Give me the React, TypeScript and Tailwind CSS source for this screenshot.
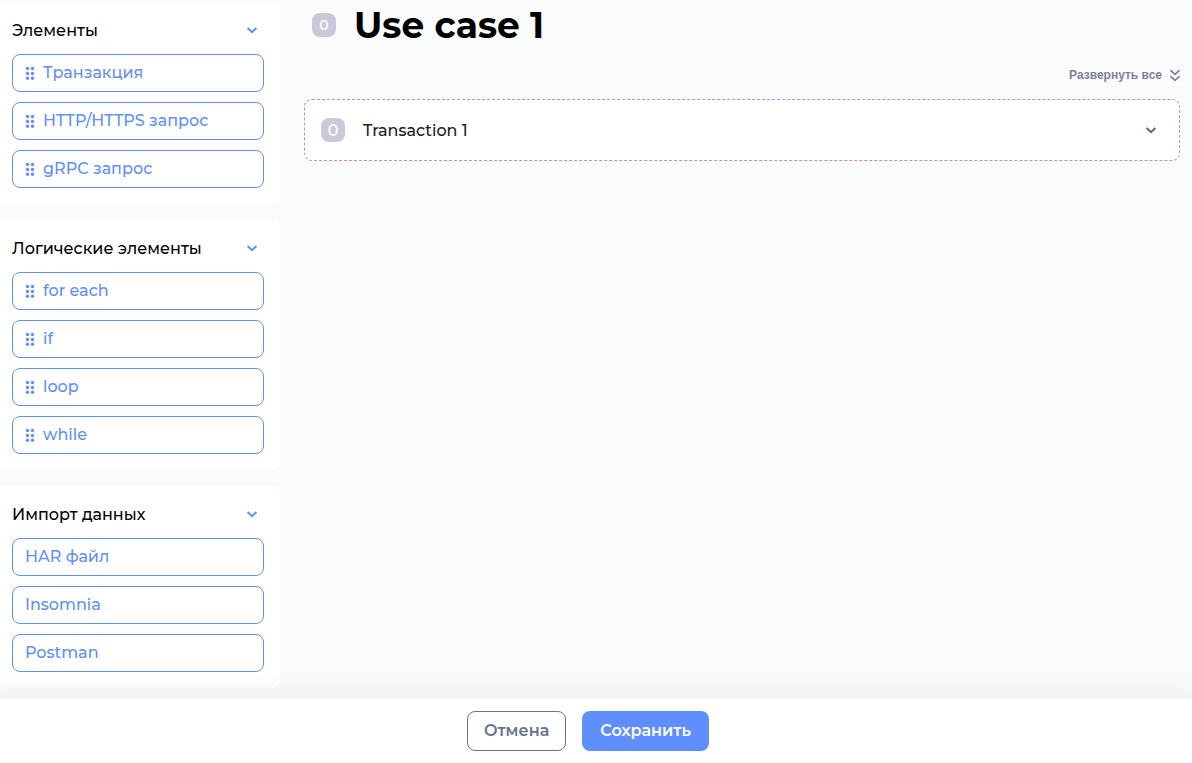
// ── Редактор сценария: палитра элементов и список шагов ──
import { useState } from "react";

interface PaletteSection {
  title: string;
  items: string[];
  draggable: boolean;
}

const SECTIONS: PaletteSection[] = [
  {
    title: "Элементы",
    items: ["Транзакция", "HTTP/HTTPS запрос", "gRPC запрос"],
    draggable: true,
  },
  {
    title: "Логические элементы",
    items: ["for each", "if", "loop", "while"],
    draggable: true,
  },
  {
    title: "Импорт данных",
    items: ["HAR файл", "Insomnia", "Postman"],
    draggable: false,
  },
];

export default function App() {
  return (
    <div className="flex min-h-screen flex-col bg-[#fafcfb] font-['Montserrat','Inter',sans-serif] text-base text-black">
      <div className="flex flex-1 gap-6 pr-3">
        {/* Палитра */}
        <aside className="flex w-70 shrink-0 flex-col gap-4 pt-0.5 pb-2">
          {SECTIONS.map((section) => (
            <Section key={section.title} section={section} />
          ))}
        </aside>

        {/* Сценарий */}
        <main className="min-w-0 flex-1">
          <div className="flex h-12 items-center gap-4.5 pt-0.5 pl-2">
            <Badge size="small" />
            <h1 className="text-4xl font-bold">Use case 1</h1>
          </div>
          <div className="mt-[15px] flex justify-end">
            <button
              type="button"
              className="flex h-6 items-center gap-2 font-['Liberation_Sans',Arial,sans-serif] text-xs font-bold text-[#80809b]"
            >
              Развернуть все
              <svg width="10" height="13" viewBox="0 0 10 13" fill="none" aria-hidden="true">
                <path d="M0.4 1.2l4.6 4.2L9.6 1.2M0.4 7.2l4.6 4.2L9.6 7.2" stroke="currentColor" strokeWidth="1.6" />
              </svg>
            </button>
          </div>
          <div className="mt-3 rounded-lg border border-dashed border-[#b78af0] bg-white">
            <button type="button" className="flex h-15 w-full items-center gap-4.5 pr-5 pl-4 text-left">
              <Badge size="large" />
              <span className="flex-1 pt-0.5 font-medium text-[#212121]">Transaction 1</span>
              <Chevron className="text-[#596b80]" />
            </button>
          </div>
        </main>
      </div>

      {/* Панель действий */}
      <footer className="sticky bottom-0 flex h-16 items-center justify-center gap-4 bg-white pr-4 shadow-[0_0_24px_8px_rgba(89,107,128,0.08)]">
        <button
          type="button"
          className="h-10 rounded-lg border border-[#64748b] px-4 font-semibold text-[#64748b]"
        >
          Отмена
        </button>
        <button type="button" className="h-10 rounded-lg bg-[#5f8fff] px-4.5 font-semibold text-white">
          Сохранить
        </button>
      </footer>
    </div>
  );
}

function Section({ section }: { section: PaletteSection }) {
  const [open, setOpen] = useState(true);

  return (
    <section className="rounded-r-lg bg-white px-3 pr-4 pb-4">
      <h2>
        <button
          type="button"
          aria-expanded={open}
          onClick={() => setOpen(!open)}
          className="flex h-13 w-full items-center justify-between pt-1 pr-1 text-left font-medium"
        >
          <span className="pt-0.5">{section.title}</span>
          <Chevron className={open ? "text-[#5f8fff]" : "-rotate-90 text-[#5f8fff]"} />
        </button>
      </h2>
      {open && (
        <ul className="flex flex-col gap-2.5">
          {section.items.map((item) => (
            <li key={item}>
              <button
                type="button"
                draggable={section.draggable}
                className="flex h-9.5 w-full items-center gap-2 rounded-lg border border-[#5f8fff] px-3 text-left font-medium text-[#5f8fff]"
              >
                {section.draggable && <DragHandle />}
                {item}
              </button>
            </li>
          ))}
        </ul>
      )}
    </section>
  );
}

function Badge({ size }: { size: "small" | "large" }) {
  return (
    <span
      className={`flex h-6 w-6 shrink-0 items-center justify-center rounded-lg bg-[#c9c9da] font-medium text-white ${
        size === "small" ? "text-sm" : "pt-0.5 text-base"
      }`}
    >
      0
    </span>
  );
}

function Chevron({ className }: { className: string }) {
  return (
    <svg width="16" height="16" viewBox="0 0 16 16" fill="none" aria-hidden="true" className={className}>
      <path d="M3.6 6L8 10.2l4.4-4.2" stroke="currentColor" strokeWidth="2" />
    </svg>
  );
}

function DragHandle() {
  return (
    <svg width="10" height="14" viewBox="0 0 10 14" fill="currentColor" aria-hidden="true">
      <circle cx="2.5" cy="2.5" r="1.7" />
      <circle cx="7.5" cy="2.5" r="1.7" />
      <circle cx="2.5" cy="7.5" r="1.7" />
      <circle cx="7.5" cy="7.5" r="1.7" />
      <circle cx="2.5" cy="12.3" r="1.7" />
      <circle cx="7.5" cy="12.3" r="1.7" />
    </svg>
  );
}
